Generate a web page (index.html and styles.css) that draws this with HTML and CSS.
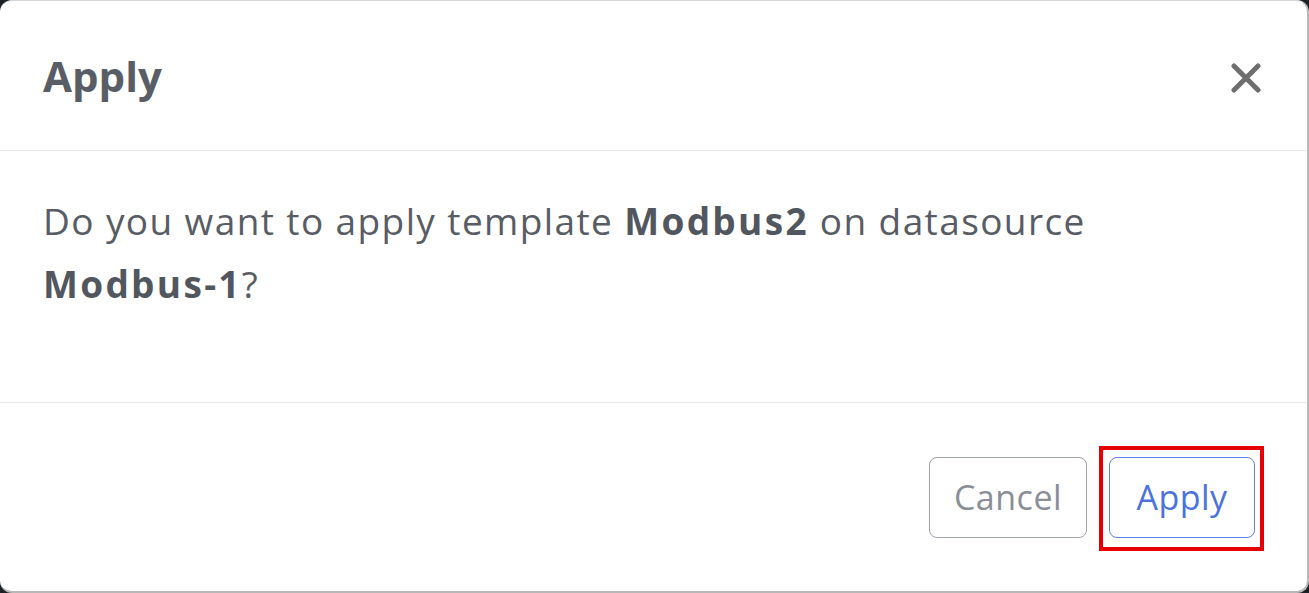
FILE: index.html
```html
<!DOCTYPE html>
<html lang="en">
<head>
<meta charset="utf-8">
<title>Apply</title>
<link rel="stylesheet" href="styles.css">
</head>
<body>
<div class="modal">
  <div class="modal-header">
    <h5 class="modal-title">Apply</h5>
    <button class="close" type="button" aria-label="Close">
      <svg viewBox="0 0 30 30" width="30" height="30"><path d="M3 3 L27 27 M27 3 L3 27" stroke="#6e6e6e" stroke-width="5" stroke-linecap="round"/></svg>
    </button>
  </div>
  <div class="modal-body">
    <p>Do you want to apply template <b>Modbus2</b> on datasource <b class="nowrap">Modbus-1</b>?</p>
  </div>
  <div class="modal-footer">
    <button class="btn btn-cancel" type="button">Cancel</button>
    <button class="btn btn-apply" type="button">Apply</button>
  </div>
</div>
</body>
</html>
```
FILE: styles.css
```css
html, body {
  margin: 0;
  padding: 0;
  background: #1c2226;
  width: 1309px;
  height: 593px;
  overflow: hidden;
}
body {
  font-family: "Open Sans", "Noto Sans", sans-serif;
  color: #585c64;
}
.modal {
  box-sizing: border-box;
  width: 1309px;
  height: 593px;
  background: #fff;
  border-radius: 12px;
  border-top: 1px solid #d6d6d6;
  border-right: 2px solid #b8b8b8;
  border-bottom: 2px solid #b8b8b8;
  display: flex;
  flex-direction: column;
}
.modal-header {
  height: 150px;
  box-sizing: border-box;
  display: flex;
  align-items: center;
  justify-content: space-between;
  padding: 0 46px 0 43px;
  border-bottom: 1px solid #e6e8ec;
}
.modal-title {
  margin: 0;
  font-size: 42px;
  font-weight: 700;
  color: #595d65;
}
.close {
  background: none;
  border: 0;
  padding: 0;
  width: 30px;
  height: 30px;
  margin-top: 4px;
  display: flex;
}
.modal-body {
  height: 252px;
  box-sizing: border-box;
  padding: 38px 200px 0 43px;
  border-bottom: 1px solid #e6e8ec;
}
.modal-body p {
  margin: 0;
  font-size: 37px;
  letter-spacing: 1.4px;
  line-height: 63px;
  color: #585c64;
}
.modal-body b {
  font-weight: 700;
  color: #52565e;
  letter-spacing: 2.3px;
}
.nowrap {
  white-space: nowrap;
}
.modal-footer {
  flex: 1;
  display: flex;
  align-items: center;
  justify-content: flex-end;
  gap: 22px;
  padding: 0 52px 0 0;
}
.btn {
  height: 81px;
  box-sizing: border-box;
  background: #fff;
  border-radius: 8px;
  font-family: "Open Sans", "Noto Sans", sans-serif;
  font-size: 34px;
  letter-spacing: 0.5px;
  padding: 0;
}
.btn-cancel {
  width: 158px;
  border: 1px solid #9ea2a9;
  color: #8a8e96;
}
.btn-apply {
  width: 146px;
  border: 1px solid #5b80e6;
  color: #4b72e0;
  position: relative;
}
.btn-apply::after {
  content: "";
  position: absolute;
  top: -12px;
  right: -10px;
  bottom: -14px;
  left: -11px;
  border: 4px solid #e60000;
}
```
